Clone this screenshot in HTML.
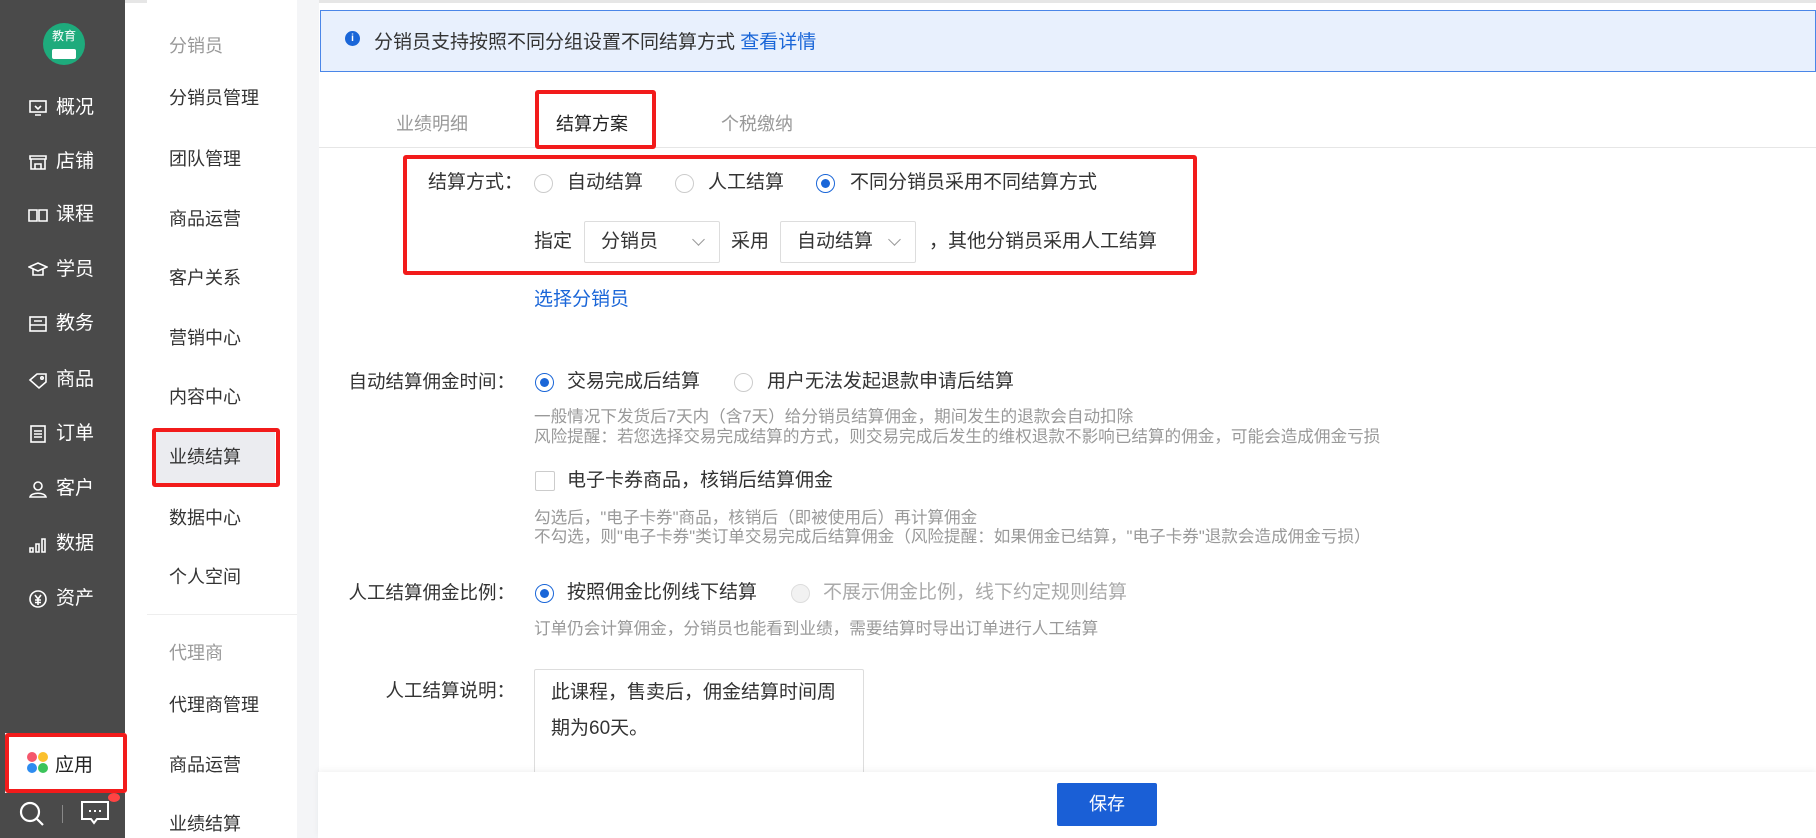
<!DOCTYPE html><html><head><meta charset="utf-8"><style>
*{margin:0;padding:0;box-sizing:border-box}
body{width:1816px;height:838px;overflow:hidden;background:#fff;font-family:"Liberation Sans","Noto Sans CJK SC",sans-serif;position:relative;color:#333}
.a{position:absolute;white-space:nowrap}
.side{position:absolute;left:0;top:0;width:125px;height:838px;background:#4a4a4a}
.si{position:absolute;left:28px;color:#fff;font-size:19px;line-height:24px;display:flex;align-items:center}
.si svg{width:20px;height:20px;margin-right:8px;stroke:#fff;fill:none;stroke-width:1.6}
.sub{position:absolute;left:147px;top:0;width:150px;height:838px;background:#fff}
.s2{position:absolute;left:22px;font-size:18px;color:#333;line-height:24px}
.lbl{font-size:19px;color:#333;line-height:24px}
.hint{font-size:16.6px;color:#999;line-height:20px}
.rad{position:absolute;width:19px;height:19px;border:1px solid #ccc;border-radius:50%;background:#fff}
.rad.on{border-color:#1a66d8}
.rad.on:after{content:"";position:absolute;left:4px;top:4px;width:9px;height:9px;border-radius:50%;background:#1a66d8}
.rad.dis{background:#f2f2f2;border-color:#ddd}
.sel{position:absolute;height:42px;border:1px solid #ddd;border-radius:2px;font-size:19px;line-height:40px;padding-left:16px}
.sel:after{content:"";position:absolute;right:16px;top:13px;width:8px;height:8px;border-right:1.3px solid #999;border-bottom:1.3px solid #999;transform:rotate(45deg)}
.red{position:absolute;border:4px solid #f21b1b;border-radius:3px}
</style></head><body>
<div class="a" style="left:0;top:0;width:1816px;height:3px;background:#e6e6e6"></div>
<div class="side">
 <div class="a" style="left:43px;top:23px;width:42px;height:42px;border-radius:50%;background:#1eab7c;color:#fff;font-size:12px;text-align:center;line-height:26px">教育<div style="position:absolute;left:9px;top:26px;width:24px;height:10px;background:#fff;border-radius:2px"></div></div>
 <div class="si" style="top:96px"><svg viewBox="0 0 20 20"><rect x="2" y="3" width="16" height="11"/><path d="M7 17h6M7 8l3 3 3-3"/></svg>概况</div>
 <div class="si" style="top:150px"><svg viewBox="0 0 20 20"><path d="M2 4h16v3H2zM3 7v10h14V7M7 17v-5h6v5"/></svg>店铺</div>
 <div class="si" style="top:203px"><svg viewBox="0 0 20 20"><path d="M1 5h8v11H1zM11 5h8v11h-8z"/></svg>课程</div>
 <div class="si" style="top:258px"><svg viewBox="0 0 20 20"><path d="M1 7l9-4 9 4-9 4zM5 9v6h10V9"/></svg>学员</div>
 <div class="si" style="top:312px"><svg viewBox="0 0 20 20"><rect x="2" y="3" width="16" height="14"/><path d="M2 11h16M6 7h8"/></svg>教务</div>
 <div class="si" style="top:368px"><svg viewBox="0 0 20 20"><path d="M2 10l7-6h9v8l-7 6z"/><circle cx="14" cy="8" r="1.2"/></svg>商品</div>
 <div class="si" style="top:422px"><svg viewBox="0 0 20 20"><rect x="3" y="2" width="14" height="16"/><path d="M6 7h8M6 10h8M6 13h8"/></svg>订单</div>
 <div class="si" style="top:477px"><svg viewBox="0 0 20 20"><circle cx="10" cy="7" r="4"/><path d="M2 18c1-5 15-5 16 0z"/></svg>客户</div>
 <div class="si" style="top:532px"><svg viewBox="0 0 20 20"><path d="M2 14h3v4H2zM8 10h3v8H8zM14 5h3v13h-3z"/></svg>数据</div>
 <div class="si" style="top:587px"><svg viewBox="0 0 20 20"><circle cx="10" cy="10" r="8"/><path d="M7 6l3 4 3-4M10 10v6M7 11h6M7 13.5h6"/></svg>资产</div>
 <div class="a" style="left:5px;top:733px;width:120px;height:60px;background:#fff"></div>
 <div class="red" style="left:5px;top:733px;width:122px;height:60px"></div>
 <div class="a" style="left:27px;top:752px;width:22px;height:22px">
  <span class="a" style="left:0;top:0;width:10px;height:10px;border-radius:50%;background:#f5576c"></span><span class="a" style="left:11px;top:0;width:10px;height:10px;border-radius:50%;background:#fbc02d"></span><span class="a" style="left:0;top:11px;width:10px;height:10px;border-radius:50%;background:#2d8cf0"></span><span class="a" style="left:11px;top:11px;width:10px;height:10px;border-radius:50%;background:#3bc45a"></span></div>
 <div class="a" style="left:55px;top:750px;font-size:19px;color:#222">应用</div>
 <svg class="a" style="left:18px;top:800px" width="28" height="28" viewBox="0 0 28 28" fill="none" stroke="#fff" stroke-width="2.2"><circle cx="12" cy="12" r="9"/><path d="M19 19l6 6"/></svg>
 <div class="a" style="left:62px;top:805px;width:1px;height:18px;background:#888"></div>
 <svg class="a" style="left:80px;top:800px" width="30" height="26" viewBox="0 0 30 26" fill="none" stroke="#fff" stroke-width="2"><path d="M2 2h26v17H17l-3 4-3-4H2z"/><path d="M9 11h2M14 11h2M19 11h2"/></svg>
 <div class="a" style="left:108px;top:793px;width:12px;height:9px;border-radius:50%;background:#f44"></div>
</div>
<div class="sub">
 <div class="s2" style="top:34px;color:#999">分销员</div>
 <div class="s2" style="top:86px">分销员管理</div>
 <div class="s2" style="top:147px">团队管理</div>
 <div class="s2" style="top:207px">商品运营</div>
 <div class="s2" style="top:266px">客户关系</div>
 <div class="s2" style="top:326px">营销中心</div>
 <div class="s2" style="top:385px">内容中心</div>
 <div class="a" style="left:6px;top:432px;width:122px;height:52px;background:#ebecf0"></div>
 <div class="red" style="left:5px;top:428px;width:128px;height:59px"></div>
 <div class="s2" style="top:445px">业绩结算</div>
 <div class="s2" style="top:506px">数据中心</div>
 <div class="s2" style="top:565px">个人空间</div>
 <div class="a" style="left:0;top:614px;width:150px;height:1px;background:#eee"></div>
 <div class="s2" style="top:641px;color:#999">代理商</div>
 <div class="s2" style="top:693px">代理商管理</div>
 <div class="s2" style="top:753px">商品运营</div>
 <div class="s2" style="top:812px">业绩结算</div>
</div>
<div class="a" style="left:297px;top:0;width:22px;height:838px;background:#f4f5f7"></div>
<div class="a" style="left:320px;top:10px;width:1496px;height:62px;background:#e8f0fd;border:1px solid #4a86e8"></div>
<div class="a" style="left:345px;top:31px;width:15px;height:15px;border-radius:50%;background:#1a66d8;color:#fff;font-size:10px;text-align:center;line-height:15px;font-weight:bold">i</div>
<div class="a" style="left:374px;top:27px;font-size:19px;color:#333">分销员支持按照不同分组设置不同结算方式 <span style="color:#1a66d8">查看详情</span></div>
<div class="a" style="left:319px;top:147px;width:1497px;height:1px;background:#e6e6e6"></div>
<div class="a" style="left:396px;top:110px;font-size:18px;color:#999">业绩明细</div>
<div class="a" style="left:556px;top:110px;font-size:18px;color:#222">结算方案</div>
<div class="a" style="left:721px;top:110px;font-size:18px;color:#999">个税缴纳</div>
<div class="red" style="left:535px;top:90px;width:121px;height:59px;border-width:4px"></div>
<div class="red" style="left:403px;top:155px;width:794px;height:120px"></div>
<div class="a lbl" style="left:428px;top:171px">结算方式：</div>
<div class="rad" style="left:534px;top:174px"></div><div class="a lbl" style="left:567px;top:171px">自动结算</div>
<div class="rad" style="left:675px;top:174px"></div><div class="a lbl" style="left:708px;top:171px">人工结算</div>
<div class="rad on" style="left:816px;top:174px"></div><div class="a lbl" style="left:850px;top:171px">不同分销员采用不同结算方式</div>
<div class="a lbl" style="left:534px;top:230px">指定</div>
<div class="sel" style="left:584px;top:221px;width:136px">分销员</div>
<div class="a lbl" style="left:731px;top:230px">采用</div>
<div class="sel" style="left:780px;top:221px;width:136px">自动结算</div>
<div class="a lbl" style="left:929px;top:230px">，其他分销员采用人工结算</div>
<div class="a lbl" style="left:534px;top:288px;color:#1a66d8">选择分销员</div>
<div class="a lbl" style="left:345px;top:370px;width:170px;text-align:right;font-size:18.5px">自动结算佣金时间：</div>
<div class="rad on" style="left:535px;top:373px"></div><div class="a lbl" style="left:567px;top:370px">交易完成后结算</div>
<div class="rad" style="left:734px;top:373px"></div><div class="a lbl" style="left:767px;top:370px">用户无法发起退款申请后结算</div>
<div class="a hint" style="left:534px;top:407px">一般情况下发货后7天内（含7天）给分销员结算佣金，期间发生的退款会自动扣除</div>
<div class="a hint" style="left:534px;top:427px">风险提醒：若您选择交易完成结算的方式，则交易完成后发生的维权退款不影响已结算的佣金，可能会造成佣金亏损</div>
<div class="a" style="left:535px;top:471px;width:20px;height:20px;border:1px solid #ccc;border-radius:2px"></div>
<div class="a lbl" style="left:567px;top:469px">电子卡券商品，核销后结算佣金</div>
<div class="a hint" style="left:534px;top:508px">勾选后，"电子卡券"商品，核销后（即被使用后）再计算佣金</div>
<div class="a hint" style="left:534px;top:527px">不勾选，则"电子卡券"类订单交易完成后结算佣金（风险提醒：如果佣金已结算，"电子卡券"退款会造成佣金亏损）</div>
<div class="a lbl" style="left:345px;top:581px;width:170px;text-align:right;font-size:18.5px">人工结算佣金比例：</div>
<div class="rad on" style="left:535px;top:584px"></div><div class="a lbl" style="left:567px;top:581px">按照佣金比例线下结算</div>
<div class="rad dis" style="left:791px;top:584px"></div><div class="a lbl" style="left:823px;top:581px;color:#aaa">不展示佣金比例，线下约定规则结算</div>
<div class="a hint" style="left:534px;top:619px">订单仍会计算佣金，分销员也能看到业绩，需要结算时导出订单进行人工结算</div>
<div class="a lbl" style="left:345px;top:679px;width:170px;text-align:right;font-size:18.5px">人工结算说明：</div>
<div class="a" style="left:534px;top:669px;width:330px;height:110px;border:1px solid #ddd;border-radius:2px;font-size:19px;line-height:36px;padding:5px 12px 4px 16px;white-space:normal;color:#333">此课程，售卖后，佣金结算时间周期为60天。</div>
<div class="a" style="left:318px;top:772px;width:1498px;height:66px;background:#fff;box-shadow:0 -2px 6px rgba(0,0,0,.05)"></div>
<div class="a" style="left:1057px;top:783px;width:100px;height:43px;background:#1a5fd6;border-radius:2px;color:#fff;font-size:18px;text-align:center;line-height:43px">保存</div>
</body></html>
